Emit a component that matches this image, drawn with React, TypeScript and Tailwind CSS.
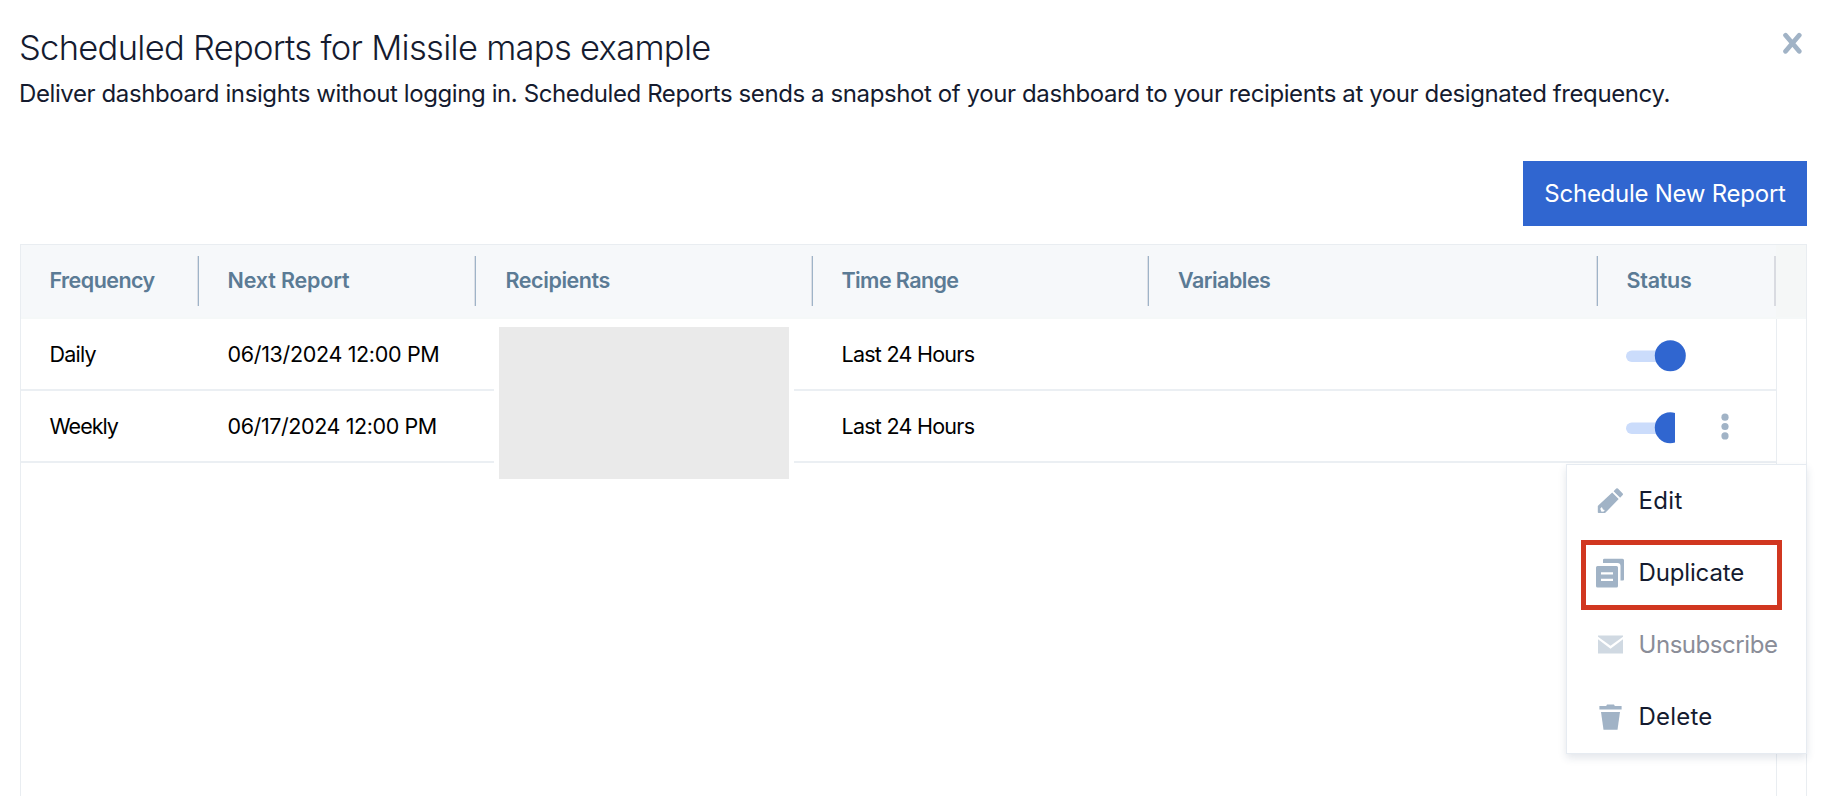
import type { ReactNode } from 'react';

const columns = [
  { label: 'Frequency', cls: 'w-[178px] pl-[28.5px] tracking-[-0.55px]' },
  { label: 'Next Report', cls: 'w-[277px] pl-[28.5px] tracking-[-0.15px]' },
  { label: 'Recipients', cls: 'w-[337px] pl-[29.5px] tracking-[-0.43px]' },
  { label: 'Time Range', cls: 'w-[336px] pl-[28.5px] tracking-[-0.6px]' },
  { label: 'Variables', cls: 'w-[449px] pl-[29px] tracking-[-0.52px]' },
];

const rows = [
  { freq: 'Daily', freqCls: 'tracking-[-0.75px]', next: '06/13/2024 12:00 PM', nextCls: 'tracking-[-0.33px]', menu: false },
  { freq: 'Weekly', freqCls: 'tracking-[-1px]', next: '06/17/2024 12:00 PM', nextCls: 'tracking-[-0.41px]', menu: true },
];

function Toggle({ clipped }: { clipped: boolean }) {
  return (
    <svg width={clipped ? 49 : 60} height="32" viewBox={clipped ? '0 0 49 32' : '0 0 60 32'} className="mt-[3px] shrink-0">
      <rect x="0" y="10.5" width="46" height="11.5" rx="5.75" fill="#cbdcfb" />
      <circle cx="44.3" cy="15.8" r="15.5" fill="#3066d0" />
    </svg>
  );
}

function Dots() {
  return (
    <svg width="8" height="28" viewBox="0 0 8 28" fill="#a1b3c6" className="mt-[2px]">
      <circle cx="4" cy="4.2" r="3.6" />
      <circle cx="4" cy="13.5" r="3.6" />
      <circle cx="4" cy="22.9" r="3.6" />
    </svg>
  );
}

function PencilIcon() {
  return (
    <svg width="28" height="30" viewBox="0 0 28 30" fill="#a1b3c6">
      <path d="M20.2 2.6a1.2 1.2 0 0 1 1.7 0l4.8 4.8a1.2 1.2 0 0 1 0 1.7l-2.6 2.6-6.5-6.5z" />
      <path fillRule="evenodd" d="M16.2 6.6l6.5 6.5-12.9 13.2-.8.7H2.6a.8.8 0 0 1-.8-.8v-6.1l.7-.8zM5.9 20.9l-1.7 1.8 1.3 3 2.3-.1 1-1.7-1.8-.4z" />
    </svg>
  );
}

function DuplicateIcon() {
  return (
    <svg width="28" height="30" viewBox="0 0 28 30" fill="#a1b3c6" className="-mt-px">
      <path d="M8.3 .8h18.2a1.5 1.5 0 0 1 1.5 1.5v19.2a1 1 0 0 1-1 1h-2.5V8a3 3 0 0 0-3-3H7V2.1A1.3 1.3 0 0 1 8.3 .8z" />
      <path fillRule="evenodd" d="M1.5 8h19A1.5 1.5 0 0 1 22 9.5v18.5a1.5 1.5 0 0 1-1.5 1.5h-19A1.5 1.5 0 0 1 0 28V9.5A1.5 1.5 0 0 1 1.5 8zM5 14.3v2.2h12v-2.2zM5 20.7v2.2h12v-2.2z" />
    </svg>
  );
}

function MailIcon() {
  return (
    <svg width="28" height="30" viewBox="0 0 28 30" fill="#d0d9e2">
      <path d="M2 5.5h25v1.2L14.5 15.7 2 6.7z" />
      <path d="M2 9.2l12.5 9.6L27 9.2v14.3H2z" />
    </svg>
  );
}

function TrashIcon() {
  return (
    <svg width="28" height="30" viewBox="0 0 28 30" fill="#a1b3c6">
      <path d="M3.4 4.1h6.8l.8-1.600h7l.8 1.600h6.8v3.400H3.4z" />
      <path d="M5 10h19l-2.5 17.800H7.5z" />
    </svg>
  );
}

function MenuItem({ icon, cls, children }: { icon: ReactNode; cls: string; children: string }) {
  return (
    <div className="flex h-[72px] items-center pl-[29px]">
      <div className="w-[42.5px] shrink-0">{icon}</div>
      <span className={`leading-[30px] ${cls}`}>{children}</span>
    </div>
  );
}

export default function App() {
  return (
    <div className="relative flex h-[796px] w-[1836px] flex-col overflow-hidden bg-white pl-5 pr-[29px] font-['Inter',sans-serif] text-2xl text-[#151b2f]">
      <header className="flex h-[161px] justify-between">
        <div className="-ml-px pt-[26px]">
          <h1 className="whitespace-nowrap text-[34.5px] font-light leading-[44px] tracking-[-0.7px]">Scheduled Reports for Missile maps example</h1>
          <p className="mt-[9px] whitespace-nowrap leading-[30px] tracking-[-0.4px]">
            Deliver dashboard insights without logging in. Scheduled Reports sends a snapshot of your dashboard to your recipients at your designated frequency.
          </p>
        </div>
        <button className="mr-[4px] mt-[32px] h-[23px] w-[21px] shrink-0" aria-label="Close">
          <svg width="21" height="23" viewBox="0 0 21 23" fill="none" stroke="#a1b3c6" strokeWidth="4.8" strokeLinecap="round">
            <path d="M3.6 3.3l13.6 16M17.2 3.3l-13.6 16" />
          </svg>
        </button>
      </header>
      <div className="flex h-[83px] justify-end">
        <button className="flex h-[65px] w-[284px] items-center justify-center whitespace-nowrap bg-[#3066d0] tracking-[-0.26px] text-white">Schedule New Report</button>
      </div>

      <section className="relative flex min-h-0 flex-1 flex-col border-x border-t border-[#e9edf1] text-[21.5px]">
        <div className="flex h-[74px] shrink-0 border-b-2 border-[#f5f8f8] bg-[#f6f8fa] font-semibold text-[#5b7b95]">
          {columns.map((c) => (
            <div key={c.label} className={`flex shrink-0 pt-[11px] ${c.cls}`}>
              <span className="mt-[10px] flex-1 leading-7">{c.label}</span>
              <span className="h-[50px] w-0.5 border-l border-r border-l-[#dcdfe6] border-r-[#9fb4c8]" />
            </div>
          ))}
          <div className="flex w-[178px] shrink-0 pl-[28.5px] pt-[11px] tracking-[-0.25px]">
            <span className="mt-[10px] flex-1 leading-7">Status</span>
            <span className="h-[50px] w-0.5 bg-[#d9dbe1]" />
          </div>
          <div className="flex-1 bg-[#f5f7f7]" />
        </div>

        <div className="flex min-h-0 flex-1">
          <div className="w-[1756px] shrink-0 border-r border-[#e9edf1] text-black">
            {rows.map((r) => (
              <div key={r.freq} className="flex h-[72px] items-center whitespace-nowrap border-b-2 border-[#ebeff3] pl-[28.5px]">
                <span className={`w-[178px] ${r.freqCls}`}>{r.freq}</span>
                <span className={`w-[614px] ${r.nextCls}`}>{r.next}</span>
                <span className="w-[784.5px] tracking-[-0.74px]">Last 24 Hours</span>
                <Toggle clipped={r.menu} />
                {r.menu && <span className="ml-[46px]"><Dots /></span>}
              </div>
            ))}
          </div>
        </div>
        <div className="absolute left-[473px] top-[77px] h-[162px] w-[300px] border-[5px] border-white bg-[#eaeaea]" />
      </section>

      <div className="absolute left-[1566px] top-[464px] h-[290px] w-[241px] border border-[#e6ebf1] bg-white shadow-[0_4px_8px_rgba(40,60,100,0.13)]">
        <MenuItem icon={<PencilIcon />} cls="tracking-[0.37px]">Edit</MenuItem>
        <MenuItem icon={<DuplicateIcon />} cls="tracking-[-0.15px]">Duplicate</MenuItem>
        <MenuItem icon={<MailIcon />} cls="tracking-[-0.45px] text-[#8a8d98]">Unsubscribe</MenuItem>
        <MenuItem icon={<TrashIcon />} cls="tracking-[0.2px]">Delete</MenuItem>
      </div>
      <div className="absolute left-[1581px] top-[540px] h-[70px] w-[201px] border-[5px] border-[#d13720]" />
    </div>
  );
}
